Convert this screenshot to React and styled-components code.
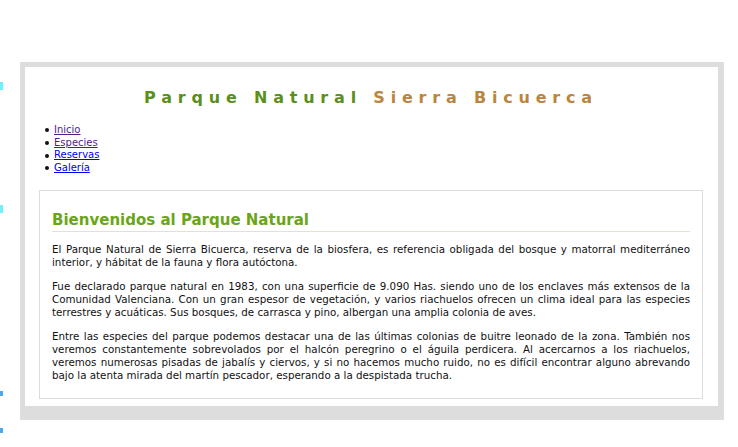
import React from 'react';
import styled, { createGlobalStyle } from 'styled-components';

const GlobalStyle = createGlobalStyle`
    html, body {
        margin: 0;
        padding: 0;
        background: #ffffff;
    }
    body {
        font-family: "DejaVu Sans", "Liberation Sans", sans-serif;
        color: #111;
    }
`

const Page = styled.div`
    position: relative;
    padding: 62px 0 0 20px;
    height: 385px;
`

// thin coloured ticks on the left edge of the capture
const EdgeGuide = styled.svg`
    position: absolute;
    left: 0;
    top: 0;
`

const Frame = styled.div`
    width: 693px;
    background: #dddddd;
    padding: 5px 6px 14px 5px;
`

const Sheet = styled.div`
    display: flex;
    flex-direction: column;
    background: #ffffff;
    padding: 21px 15px 7px 14px;
`

const Title = styled.h1`
    margin: 0 0 16px 0;
    text-align: center;
    font-size: 16px;
    font-weight: bold;
    letter-spacing: 5.8px;
    line-height: 20px;
    color: #5b8f1c;
    span {
        color: #b9853f;
    }
`

const NavList = styled.ul`
    display: flex;
    flex-direction: column;
    margin: 0 0 15px 0;
    padding: 0 0 0 6px;
    list-style: none;
    font-size: 10px;
    line-height: 12.7px;
`

const NavItem = styled.li`
    display: flex;
    align-items: center;
    gap: 5px;
    &::before {
        content: '';
        width: 4px;
        height: 4px;
        border-radius: 50%;
        background: #111;
    }
    a {
        color: ${props => props.visited ? '#551a8b' : '#0000ee'};
        text-decoration: underline;
    }
`

const Content = styled.section`
    display: flex;
    flex-direction: column;
    gap: 11px;
    border: 1px solid #dcdcdc;
    padding: 20px 12px 16px 12px;
`

const Heading = styled.h2`
    margin: 0;
    padding-bottom: 2px;
    font-size: 15px;
    line-height: 18px;
    font-weight: bold;
    color: #6aa517;
    border-bottom: 1px solid #e4e0d2;
`

const Paragraph = styled.p`
    margin: 0;
    font-size: 10.3px;
    line-height: 13px;
    text-align: justify;
    color: #111;
`

const links = [
    { label: 'Inicio', visited: true },
    { label: 'Especies', visited: true },
    { label: 'Reservas', visited: false },
    { label: 'Galería', visited: false },
]

export default function App() {
    return (
        <Page>
            <GlobalStyle />
            <EdgeGuide width="4" height="447" viewBox="0 0 4 447">
                <rect x="0" y="82" width="3" height="8" fill="#6ff0ff" />
                <rect x="0" y="205" width="3" height="8" fill="#6ff0ff" />
                <rect x="0" y="391" width="3" height="5" fill="#4aa8f0" />
                <rect x="0" y="428" width="3" height="5" fill="#4aa8f0" />
            </EdgeGuide>
            <Frame>
                <Sheet>
                    <Title>Parque Natural <span>Sierra Bicuerca</span></Title>
                    <NavList>
                        {links.map(link => (
                            <NavItem key={link.label} visited={link.visited}>
                                <a href="#">{link.label}</a>
                            </NavItem>
                        ))}
                    </NavList>
                    <Content>
                        <Heading>Bienvenidos al Parque Natural</Heading>
                        <Paragraph>
                            El Parque Natural de Sierra Bicuerca, reserva de la biosfera, es referencia obligada del bosque y matorral mediterráneo interior, y hábitat de la fauna y flora autóctona.
                        </Paragraph>
                        <Paragraph>
                            Fue declarado parque natural en 1983, con una superficie de 9.090 Has. siendo uno de los enclaves más extensos de la Comunidad Valenciana. Con un gran espesor de vegetación, y varios riachuelos ofrecen un clima ideal para las especies terrestres y acuáticas. Sus bosques, de carrasca y pino, albergan una amplia colonia de aves.
                        </Paragraph>
                        <Paragraph>
                            Entre las especies del parque podemos destacar una de las últimas colonias de buitre leonado de la zona. También nos veremos constantemente sobrevolados por el halcón peregrino o el águila perdicera. Al acercarnos a los riachuelos, veremos numerosas pisadas de jabalís y ciervos, y si no hacemos mucho ruido, no es difícil encontrar alguno abrevando bajo la atenta mirada del martín pescador, esperando a la despistada trucha.
                        </Paragraph>
                    </Content>
                </Sheet>
            </Frame>
        </Page>
    );
}
